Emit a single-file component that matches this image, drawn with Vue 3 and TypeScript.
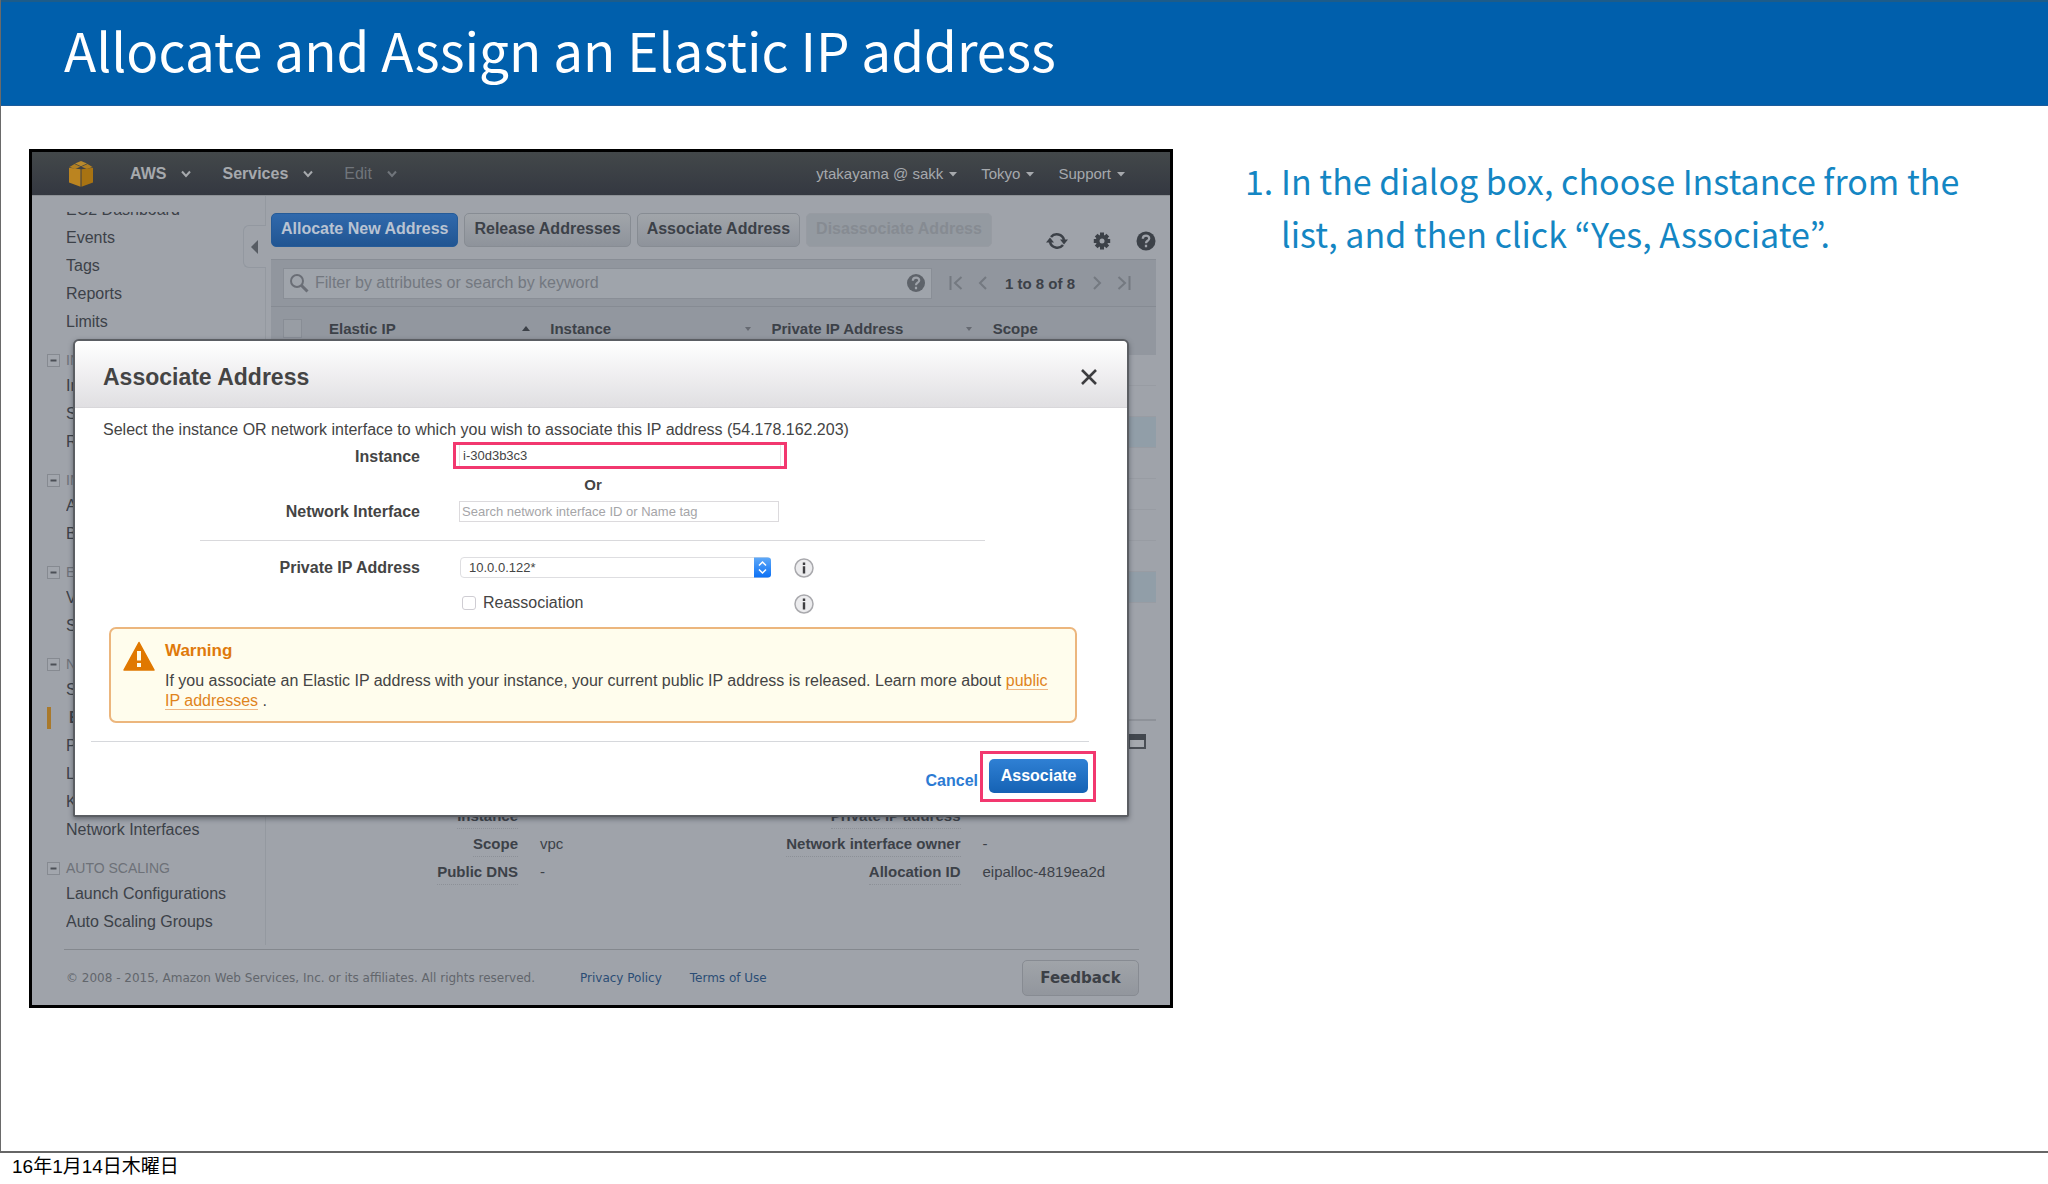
<script setup lang="ts">
import { ref } from 'vue'

interface NavItem {
  label: string
  active?: boolean
}
interface NavGroup {
  title?: string
  items: NavItem[]
}

const navGroups: NavGroup[] = [
  { items: [{ label: 'Events' }, { label: 'Tags' }, { label: 'Reports' }, { label: 'Limits' }] },
  { title: 'INSTANCES', items: [{ label: 'Instances' }, { label: 'Spot Requests' }, { label: 'Reserved Instances' }] },
  { title: 'IMAGES', items: [{ label: 'AMIs' }, { label: 'Bundle Tasks' }] },
  { title: 'ELASTIC BLOCK STORE', items: [{ label: 'Volumes' }, { label: 'Snapshots' }] },
  {
    title: 'NETWORK & SECURITY',
    items: [
      { label: 'Security Groups' },
      { label: 'Elastic IPs', active: true },
      { label: 'Placement Groups' },
      { label: 'Load Balancers' },
      { label: 'Key Pairs' },
      { label: 'Network Interfaces' },
    ],
  },
  { title: 'AUTO SCALING', items: [{ label: 'Launch Configurations' }, { label: 'Auto Scaling Groups' }] },
]

const leftMenu = [
  { label: 'AWS', cls: 'strong' },
  { label: 'Services', cls: 'strong' },
  { label: 'Edit', cls: 'dim' },
]
const rightMenu = ['ytakayama @ sakk', 'Tokyo', 'Support']

const columns = [
  { label: 'Elastic IP', sort: 'up' },
  { label: 'Instance', sort: 'down' },
  { label: 'Private IP Address', sort: 'down' },
  { label: 'Scope', sort: '' },
]
const rowTints = [false, false, true, false, false, false, false, true]

const detailLists = [
  [
    { term: 'Instance', value: '' },
    { term: 'Scope', value: 'vpc' },
    { term: 'Public DNS', value: '-' },
  ],
  [
    { term: 'Private IP address', value: '' },
    { term: 'Network interface owner', value: '-' },
    { term: 'Allocation ID', value: 'eipalloc-4819ea2d' },
  ],
]

const instanceId = ref('i-30d3b3c3')
const networkInterface = ref('')
const privateIp = ref('10.0.0.122*')
const reassociation = ref(false)
const keyword = ref('')
</script>

<template>
  <div class="page">
    <div class="slide">
      <header class="slide-head"><h1>Allocate and Assign an Elastic IP address</h1></header>
      <div class="slide-body">
        <section class="console">
          <nav class="topbar">
            <svg class="cube" viewBox="0 0 24 26" aria-hidden="true">
              <path d="M12 0 18 2.600 12 5.200 6 2.600Z" fill="#b98a2c" />
              <path d="M5.500 3 11.500 5.800 6 8 .500 6ZM18.500 3 12.500 5.800 18 8 23.500 6Z" fill="#b07f22" />
              <path d="M0 6.800 11.500 8.200V25.800L0 21.600Z" fill="#bb8420" />
              <path d="M24 6.800 12.500 8.200V25.800L24 21.600Z" fill="#a87312" />
            </svg>
            <button v-for="m in leftMenu" :key="m.label" type="button" class="menu" :class="m.cls">
              {{ m.label }}
              <svg class="chev" viewBox="0 0 10 8" aria-hidden="true"><path d="M1 1.500 5 6 9 1.500" fill="none" stroke="currentColor" stroke-width="2" /></svg>
            </button>
            <div class="account">
              <button v-for="m in rightMenu" :key="m" type="button" class="menu small">
                {{ m }}
                <svg class="caret" viewBox="0 0 8 6" aria-hidden="true"><path d="M0 1H8L4 5.500Z" fill="currentColor" /></svg>
              </button>
            </div>
          </nav>

          <div class="console-body">
            <aside class="sidebar">
              <div class="clipped"><a href="#">EC2 Dashboard</a></div>
              <div v-for="(g, gi) in navGroups" :key="gi">
                <div v-if="g.title" class="group">
                  <svg class="toggle" viewBox="0 0 13 13" aria-hidden="true">
                    <rect x=".5" y=".5" width="12" height="12" fill="#a2a6ad" stroke="#868a91" />
                    <path d="M3.500 6.500H9.500" stroke="#4c5057" stroke-width="2" />
                  </svg>
                  <span>{{ g.title }}</span>
                </div>
                <a v-for="i in g.items" :key="i.label" href="#" class="item" :class="{ active: i.active }">{{ i.label }}</a>
              </div>
              <button type="button" class="collapse" aria-label="Collapse menu">
                <svg viewBox="0 0 8 14" aria-hidden="true"><path d="M7 0V14L0 7Z" fill="#575c63" /></svg>
              </button>
            </aside>

            <main class="main">
              <div class="toolbar">
                <button type="button" class="btn primary">Allocate New Address</button>
                <button type="button" class="btn">Release Addresses</button>
                <button type="button" class="btn">Associate Address</button>
                <button type="button" class="btn off" disabled>Disassociate Address</button>
                <div class="tools">
                  <svg width="22" height="20" viewBox="0 0 22 20" aria-label="Refresh">
                    <path d="M5 6A7.500 7.500 0 0 1 18 9M17 14A7.500 7.500 0 0 1 4 11" fill="none" stroke="#3c4148" stroke-width="2.600" />
                    <path d="M14 8.500H22L18 13.500ZM0 11.500H8L4 6.500Z" fill="#3c4148" />
                  </svg>
                  <svg width="18" height="20" viewBox="0 0 18 20" aria-label="Settings">
                    <g stroke="#3c4148" stroke-width="4">
                      <path d="M9 1.500V18.500M.8 10H17.200M3.200 4.200 14.800 15.800M14.800 4.200 3.200 15.800" />
                    </g>
                    <circle cx="9" cy="10" r="6.200" fill="#3c4148" />
                    <circle cx="9" cy="10" r="2.500" fill="#9fa3aa" />
                  </svg>
                  <svg width="20" height="20" viewBox="0 0 20 20" aria-label="Help">
                    <circle cx="10" cy="10" r="9.500" fill="#3c4148" />
                    <path d="M6.800 7.800C6.800 3.600 13.400 3.800 13.200 7.500 13.100 9.800 10 9.700 10 12.200M10 13.800V16.200" fill="none" stroke="#9fa3aa" stroke-width="2.300" />
                  </svg>
                </div>
              </div>

              <div class="filter">
                <label class="search">
                  <svg width="20" height="20" viewBox="0 0 20 20" aria-hidden="true">
                    <circle cx="8" cy="8" r="6" fill="none" stroke="#6a6e76" stroke-width="2" />
                    <path d="M12.500 12.500 18.500 18.500" stroke="#6a6e76" stroke-width="3" />
                  </svg>
                  <input v-model="keyword" type="text" placeholder="Filter by attributes or search by keyword" aria-label="Filter" />
                  <svg width="20" height="20" viewBox="0 0 20 20" aria-hidden="true">
                    <circle cx="10" cy="10" r="9" fill="#5e636a" />
                    <path d="M6.800 7.800C6.800 3.600 13.400 3.800 13.200 7.500 13.100 9.800 10 9.700 10 12.200M10 13.800V16.200" fill="none" stroke="#9fa3aa" stroke-width="2.200" />
                  </svg>
                </label>
                <div class="pager">
                  <svg width="14" height="14" viewBox="0 0 14 14" aria-label="First"><path d="M1.500 0V14M12.500 1 6 7 12.500 13" /></svg>
                  <svg width="10" height="14" viewBox="0 0 10 14" aria-label="Previous"><path d="M8 1 2 7 8 13" /></svg>
                  <b>1 to 8 of 8</b>
                  <svg width="10" height="14" viewBox="0 0 10 14" aria-label="Next"><path d="M2 1 8 7 2 13" /></svg>
                  <svg width="14" height="14" viewBox="0 0 14 14" aria-label="Last"><path d="M12.500 0V14M1.500 1 8 7 1.500 13" /></svg>
                </div>
              </div>

              <table class="grid">
                <thead>
                  <tr>
                    <th class="pick"><input type="checkbox" aria-label="Select all" /></th>
                    <th v-for="c in columns" :key="c.label" :class="{ last: !c.sort }">
                      <div class="th">
                        {{ c.label }}
                        <svg v-if="c.sort === 'up'" width="8" height="6" viewBox="0 0 8 6"><path d="M0 5H8L4 0Z" fill="#3c4148" /></svg>
                        <svg v-if="c.sort === 'down'" width="8" height="6" viewBox="0 0 8 6"><path d="M1 1H7L4 5Z" fill="#666a72" /></svg>
                      </div>
                    </th>
                  </tr>
                </thead>
                <tbody>
                  <tr v-for="(t, i) in rowTints" :key="i" :class="{ tint: t }"><td v-for="n in 5" :key="n"></td></tr>
                </tbody>
              </table>

              <div class="details">
                <div class="details-head">
                  <svg width="18" height="15" viewBox="0 0 18 15" aria-label="Panel layout">
                    <rect x="1" y="1" width="16" height="13" fill="#a5a9af" stroke="#4a4f56" stroke-width="2" />
                    <path d="M0 0H18V6H0Z" fill="#42474e" />
                  </svg>
                </div>
                <div class="detail-cols">
                  <dl v-for="(l, li) in detailLists" :key="li">
                    <template v-for="d in l" :key="d.term">
                      <dt><span>{{ d.term }}</span></dt>
                      <dd>{{ d.value }}</dd>
                    </template>
                  </dl>
                </div>
              </div>
            </main>
          </div>

          <footer class="console-foot">
            <span>© 2008 - 2015, Amazon Web Services, Inc. or its affiliates. All rights reserved.</span>
            <a href="#">Privacy Policy</a>
            <a href="#">Terms of Use</a>
            <button type="button" class="feedback">Feedback</button>
          </footer>

          <form class="dialog" role="dialog" aria-labelledby="dlg-title" @submit.prevent>
            <div class="dialog-head">
              <h2 id="dlg-title">Associate Address</h2>
              <button type="button" class="close" aria-label="Close">
                <svg width="16" height="16" viewBox="0 0 16 16" aria-hidden="true"><path d="M1 1 15 15M15 1 1 15" stroke="#3d3d40" stroke-width="2.600" /></svg>
              </button>
            </div>
            <div class="dialog-body">
              <p class="intro">Select the instance OR network interface to which you wish to associate this IP address (54.178.162.203)</p>
              <div class="row first">
                <label for="instance">Instance</label>
                <div class="marked field-mark"><input id="instance" v-model="instanceId" type="text" /></div>
              </div>
              <div class="row or"><span></span><b>Or</b></div>
              <div class="row">
                <label for="eni">Network Interface</label>
                <input id="eni" v-model="networkInterface" class="text" type="text" placeholder="Search network interface ID or Name tag" />
              </div>
              <hr class="inner" />
              <div class="row">
                <label for="pip">Private IP Address</label>
                <div class="with-info">
                  <div class="select">
                    <select id="pip" v-model="privateIp"><option>10.0.0.122*</option></select>
                    <svg viewBox="0 0 17 20" aria-hidden="true">
                      <defs><linearGradient id="step" x1="0" y1="0" x2="0" y2="1"><stop offset="0" stop-color="#5fa9f8" /><stop offset="1" stop-color="#0b70f5" /></linearGradient></defs>
                      <path d="M0 0H14Q17 0 17 3V17Q17 20 14 20H0Z" fill="url(#step)" />
                      <path d="M5 8 8.500 4.500 12 8M5 12 8.500 15.500 12 12" fill="none" stroke="#fff" stroke-width="1.500" />
                    </svg>
                  </div>
                  <svg class="info" viewBox="0 0 20 20" aria-hidden="true"><circle cx="10" cy="10" r="9" fill="#ececee" stroke="#a9a9ad" stroke-width="1.500" /><path d="M10 4.500V7M10 8.300V15.500" stroke="#3f3f42" stroke-width="2.400" /></svg>
                </div>
              </div>
              <div class="row gap">
                <span></span>
                <div class="with-info">
                  <label class="check"><input v-model="reassociation" type="checkbox" />Reassociation</label>
                  <svg class="info" viewBox="0 0 20 20" aria-hidden="true"><circle cx="10" cy="10" r="9" fill="#ececee" stroke="#a9a9ad" stroke-width="1.500" /><path d="M10 4.500V7M10 8.300V15.500" stroke="#3f3f42" stroke-width="2.400" /></svg>
                </div>
              </div>
              <div class="warning">
                <svg width="32" height="30" viewBox="0 0 32 30" aria-hidden="true">
                  <path d="M16 1.500 31 29H1Z" fill="#e07800" stroke="#e07800" stroke-width="1.500" stroke-linejoin="round" />
                  <path d="M16 10V19.500M16 22V26" stroke="#fffbe8" stroke-width="4" />
                </svg>
                <div>
                  <h3>Warning</h3>
                  <p>If you associate an Elastic IP address with your instance, your current public IP address is released. Learn more about <a href="#">public IP addresses</a> .</p>
                </div>
              </div>
            </div>
            <div class="dialog-foot">
              <button type="button" class="cancel">Cancel</button>
              <div class="marked"><button type="submit" class="submit">Associate</button></div>
            </div>
          </form>
        </section>

        <ol class="steps">
          <li><span>1.</span><p>In the dialog box, choose Instance from the list, and then click “Yes, Associate”.</p></li>
        </ol>
      </div>
    </div>
    <footer class="date">16年1月14日木曜日</footer>
  </div>
</template>

<style>
body {
  background: #fff;
}
</style>

<style scoped>
* {
  box-sizing: border-box;
}
h1, h2, h3, p, ol, dl, dd {
  margin: 0;
  padding: 0;
}
button, input, select {
  font: inherit;
  color: inherit;
  margin: 0;
}
button {
  background: none;
  border: 0;
  padding: 0;
}
a {
  color: inherit;
  text-decoration: none;
}
svg {
  flex: none;
  display: block;
}
.page {
  display: flex;
  flex-direction: column;
  min-height: 100vh;
  font-family: "Liberation Sans", Arial, sans-serif;
}
.slide {
  flex: 1;
  border-left: 1px solid #6a6a6a;
  border-bottom: 2px solid #666;
}
.slide-head {
  height: 106px;
  padding: 0 0 9px 63px;
  display: flex;
  align-items: center;
  background: #005fac;
  border-top: 2px solid #1d5c8a;
  border-bottom: 1px solid #1c5c9c;
}
h1 {
  font: 400 53px/60px "Noto Sans CJK JP", sans-serif;
  color: #fff;
  white-space: nowrap;
}
.slide-body {
  display: grid;
  grid-template-columns: minmax(0, 1144fr) minmax(0, 763fr);
  column-gap: 72px;
  align-items: start;
  padding: 43px 40px 0 28px;
}
.steps {
  list-style: none;
  padding-top: 5px;
  font: 400 34px/53px "Noto Sans CJK JP", sans-serif;
  color: #1486c3;
}
.steps li {
  display: flex;
}
.steps span {
  width: 36px;
  flex: none;
}
.steps p {
  padding-right: 24px;
}
.date {
  height: 31px;
  padding-left: 12px;
  font: 19px/28px "Liberation Sans", "Noto Sans CJK JP", sans-serif;
  color: #000;
}

.console {
  position: relative;
  border: 3px solid #000;
  background: #9fa3aa;
  color: #3c4148;
  font-size: 16px;
}
.topbar {
  display: flex;
  align-items: center;
  height: 43px;
  padding: 0 45px 0 37px;
  background: linear-gradient(#43484a, #343841);
  color: #a6a9ad;
}
.cube {
  width: 24px;
  height: 26px;
  margin-right: 37px;
}
.menu {
  display: flex;
  align-items: center;
  gap: 15px;
  margin-right: 31px;
  white-space: nowrap;
}
.menu.strong {
  font-weight: bold;
}
.menu.dim {
  color: #70757b;
}
.chev {
  width: 10px;
  height: 8px;
}
.account {
  display: flex;
  gap: 24px;
  margin-left: auto;
}
.menu.small {
  font-size: 15px;
  gap: 6px;
  margin-right: 0;
}
.caret {
  width: 8px;
  height: 6px;
}

.console-body {
  display: grid;
  grid-template-columns: 234px minmax(0, 1fr);
  border-top: 1px solid #8d9196;
}
.sidebar {
  position: relative;
  padding: 16px 0 9px 34px;
  border-right: 1px solid #9499a0;
}
.clipped {
  display: flex;
  align-items: flex-end;
  height: 12px;
  overflow: hidden;
  line-height: 28px;
}
.item {
  display: block;
  line-height: 28px;
  white-space: nowrap;
  overflow: hidden;
}
.item.active {
  margin-left: -19px;
  padding-left: 18px;
  line-height: 22px;
  margin-top: 3px;
  margin-bottom: 3px;
  border-left: 4px solid #a9792b;
  font-weight: bold;
}
.group {
  display: flex;
  align-items: center;
  height: 36px;
  padding-top: 12px;
  margin-left: -19px;
  gap: 6px;
  font-size: 14px;
  color: #6d7178;
  white-space: nowrap;
  overflow: hidden;
}
.toggle {
  width: 13px;
  height: 13px;
}
.collapse {
  position: absolute;
  top: 29px;
  right: -1px;
  width: 23px;
  height: 43px;
  display: flex;
  align-items: center;
  justify-content: center;
  border: 1px solid #9398a0;
  border-right: 0;
  border-radius: 6px 0 0 6px;
  background: #9fa3aa;
}
.collapse svg {
  width: 8px;
  height: 14px;
}
.main {
  padding: 17px 14px 0 5px;
}
.toolbar {
  display: flex;
  align-items: flex-start;
  gap: 6px;
  height: 46px;
}
.btn {
  height: 34px;
  padding: 0 9px 2px;
  border: 1px solid #878c93;
  border-radius: 5px;
  background: linear-gradient(#a1a5aa, #8e939b);
  font-weight: bold;
  white-space: nowrap;
  flex: 0 0 auto;
}
.btn.primary {
  border-color: #255b98;
  background: linear-gradient(#3069ac, #215592);
  color: #b9c3d2;
}
.btn.off {
  border-color: #979ba2;
  background: #949aa1;
  color: #868b92;
}
.tools {
  display: flex;
  align-items: center;
  gap: 25px;
  margin-left: auto;
  padding-top: 18px;
}
.filter {
  display: flex;
  align-items: center;
  height: 47px;
  padding: 0 25px 0 12px;
  background: #91969e;
  border-top: 1px solid #888d95;
}
.search {
  flex: 1;
  display: flex;
  align-items: center;
  gap: 6px;
  height: 31px;
  padding: 0 5px;
  background: #9fa4ab;
  border: 1px solid #898e96;
}
.search input {
  flex: 1;
  min-width: 0;
  border: 0;
  padding: 0;
  background: none;
  outline: 0;
}
.search input::placeholder {
  color: #737880;
  opacity: 1;
}
.pager {
  display: flex;
  align-items: center;
  gap: 15px;
  padding-left: 17px;
  font-size: 15px;
  white-space: nowrap;
}
.pager path {
  fill: none;
  stroke: #747980;
  stroke-width: 2;
}
.pager b {
  min-width: 74px;
  text-align: center;
}
.grid {
  width: 100%;
  table-layout: fixed;
  border-collapse: collapse;
}
.grid th {
  width: 25%;
  height: 48px;
  padding: 0 12px 4px 8px;
  background: #92979f;
  border-top: 1px solid #868b93;
  font-size: 15px;
  text-align: left;
}
.grid th.pick {
  width: 50px;
  padding-left: 12px;
}
.grid th.last {
  width: auto;
}
.pick input {
  appearance: none;
  display: block;
  width: 19px;
  height: 19px;
  border: 1px solid #888d95;
  background: #989da4;
}
.th {
  display: flex;
  align-items: center;
  justify-content: space-between;
}
.grid td {
  height: 31px;
  padding: 0;
  border-bottom: 1px solid #989ca3;
}
.grid .tint td {
  background: #919ea8;
}
.details {
  margin-top: 116px;
  border-top: 2px solid #8e9299;
  padding-top: 13px;
}
.details-head {
  display: flex;
  justify-content: flex-end;
  padding-right: 10px;
  margin-bottom: 53px;
}
.detail-cols {
  display: flex;
}
.detail-cols dl {
  flex: 1;
  display: grid;
  grid-template-columns: 247px 1fr;
  column-gap: 22px;
  line-height: 28px;
  font-size: 15px;
}
dt {
  text-align: right;
  font-weight: bold;
}
dt span {
  padding-bottom: 4px;
  border-bottom: 1px dotted #8c9097;
}
.console-foot {
  display: flex;
  align-items: center;
  height: 56px;
  margin: 4px 31px 0 32px;
  padding-left: 2px;
  border-top: 1px solid #84888e;
  font: 12px/20px "DejaVu Sans", Verdana, sans-serif;
  color: #62666c;
  white-space: nowrap;
}
.console-foot span {
  min-width: 486px;
}
.console-foot a {
  color: #2b4d75;
  margin-left: 28px;
}
.feedback {
  margin-left: auto;
  width: 117px;
  height: 36px;
  border: 1px solid #878b92;
  border-radius: 5px;
  background: linear-gradient(#a0a4a9, #92969d);
  color: #3c4046;
  font-size: 15px;
  font-weight: bold;
}

.dialog {
  position: absolute;
  top: 187px;
  left: 41px;
  right: 41px;
  border: 2px solid #5b5e63;
  border-radius: 6px 6px 2px 2px;
  background: #fff;
  color: #444;
  line-height: 20px;
  box-shadow: 0 2px 5px rgba(40, 44, 52, 0.5);
}
.dialog-head {
  display: flex;
  align-items: center;
  justify-content: space-between;
  height: 67px;
  padding: 6px 30px 0 28px;
  background: linear-gradient(#fff, #e0dfe2);
  border-bottom: 1px solid #d8d7da;
  border-radius: 5px 5px 0 0;
}
h2 {
  font-size: 23px;
  line-height: 28px;
}
.dialog-body {
  padding: 12px 26px 0 28px;
}
.intro {
  font-size: 16px;
  white-space: nowrap;
}
.row {
  display: grid;
  grid-template-columns: 317px 1fr;
  column-gap: 33px;
  align-items: center;
  min-height: 20px;
}
.row > label {
  text-align: right;
  font-weight: bold;
}
.row.first {
  margin-top: 2px;
}
.row.first > label {
  padding-top: 3px;
}
.row.or {
  margin: 6px 0;
}
.row.or b {
  width: 280px;
  text-align: center;
  font-size: 15px;
}
.row.gap {
  margin-top: 15px;
}
.marked {
  border: 3px solid #f2386f;
}
.field-mark {
  width: 334px;
}
.marked input {
  display: block;
  width: 322px;
  height: 21px;
  margin-left: 3px;
  border: 1px solid #e6e6e6;
  border-top: 0;
  border-bottom: 0;
  padding: 0 3px;
  font-size: 13px;
}
.text {
  width: 320px;
  height: 21px;
  margin-left: 6px;
  padding: 0 2px;
  border: 1px solid #dcdadd;
  font-size: 13px;
}
.text::placeholder {
  color: #a5a5a8;
  opacity: 1;
}
.inner {
  height: 1px;
  margin: 18px 116px 16px 97px;
  border: 0;
  background: #d9d9dc;
}
.with-info {
  display: flex;
  align-items: center;
  justify-content: space-between;
  width: 361px;
  padding-left: 7px;
}
.select {
  position: relative;
}
.select select {
  appearance: none;
  display: block;
  width: 311px;
  height: 21px;
  padding: 0 8px;
  border: 1px solid #dedee1;
  border-radius: 4px;
  background: #fff;
  font-size: 13px;
}
.select svg {
  position: absolute;
  top: 0;
  right: 0;
  width: 17px;
  height: 21px;
}
.info {
  width: 20px;
  height: 20px;
}
.check {
  display: flex;
  align-items: center;
  gap: 7px;
  padding: 0 0 2px 2px;
}
.check input {
  appearance: none;
  width: 14px;
  height: 14px;
  border: 1px solid #cfcdd3;
  border-radius: 3px;
}
.warning {
  display: flex;
  gap: 10px;
  min-height: 96px;
  margin: 12px 24px 0 6px;
  padding: 12px 14px 0 12px;
  border: 2px solid #ecb67d;
  border-radius: 7px;
  background: #fffded;
}
h3 {
  margin-bottom: 10px;
  font-size: 17px;
  line-height: 20px;
  color: #df7a0b;
}
.warning p {
  font-size: 16px;
}
.warning a {
  color: #e0841c;
  border-bottom: 1px solid #f0b884;
}
.dialog-foot {
  display: flex;
  align-items: center;
  justify-content: flex-end;
  margin: 18px 38px 0 16px;
  height: 74px;
  padding-bottom: 4px;
  border-top: 1px solid #d6d8dc;
  font-weight: bold;
}
.cancel {
  padding: 8px 2px 0 0;
  color: #2c7bd3;
}
.dialog-foot .marked {
  padding: 5px 5px 6px 6px;
  margin-right: -7px;
}
.submit {
  display: block;
  width: 99px;
  height: 34px;
  border-radius: 5px;
  background: linear-gradient(#2f80d4, #1562b4);
  color: #fff;
}
</style>
